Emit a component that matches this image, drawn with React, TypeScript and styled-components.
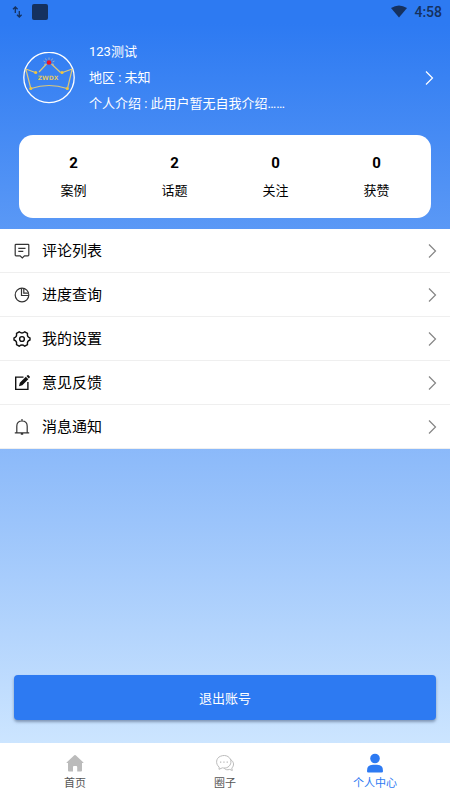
import React from "react";
import styled, { createGlobalStyle } from "styled-components";

const GlobalStyle = createGlobalStyle`
  * { box-sizing: border-box; }
  body {
    margin: 0;
    font-family: Roboto, "Noto Sans CJK SC", sans-serif;
    color: #000;
  }
  button { font: inherit; border: 0; margin: 0; padding: 0; background: none; cursor: pointer; }
  svg { display: block; flex: none; }
`;

const Screen = styled.div`
  min-height: 100vh;
  display: flex;
  flex-direction: column;
  background: linear-gradient(#2d7af2, #2d7af2 24px, #cce5ff calc(100% - 57px));
`;

const StatusBar = styled.header`
  height: 24px;
  padding: 0 8px 0 12px;
  display: flex;
  align-items: center;
  justify-content: space-between;
  color: #15315f;
`;

const StatusGroup = styled.div<{ $gap: number }>`
  display: flex;
  align-items: center;
  gap: ${(p) => p.$gap}px;
`;

const StatusTile = styled.span`
  width: 16px;
  height: 16px;
  border-radius: 2px;
  background: #15315f;
`;

const Clock = styled.time`
  font-size: 14px;
  line-height: 24px;
  font-weight: 500;
`;

const Main = styled.main`
  flex: 1;
  display: flex;
  flex-direction: column;
`;

const Profile = styled.button`
  display: flex;
  align-items: center;
  gap: 14px;
  width: 100%;
  padding: 15px 16px 18px 23px;
  color: #fff;
  text-align: left;
`;

const ProfileText = styled.div`
  flex: 1;
  font-size: 13px;
  line-height: 26px;
`;

const Line = styled.div``;

const Stats = styled.section`
  margin: 0 19px 11px;
  padding: 14px 4px 13px;
  border-radius: 14px;
  background: #fff;
  display: grid;
  grid-template-columns: repeat(4, 1fr);
`;

const Stat = styled.button`
  display: flex;
  flex-direction: column;
  align-items: center;
  color: #000;
  font-size: 13px;
`;

const StatValue = styled.strong`
  font-size: 15px;
  line-height: 28px;
`;

const StatLabel = styled.span`
  line-height: 28px;
`;

const Menu = styled.nav`
  background: #fff;
`;

const MenuRow = styled.button`
  width: 100%;
  height: 44px;
  padding: 0 13px;
  display: flex;
  align-items: center;
  gap: 11px;
  border-bottom: 1px solid #efefef;
  color: #000;
  text-align: left;
`;

const MenuLabel = styled.span`
  flex: 1;
  font-size: 15px;
  line-height: 22px;
`;

const Logout = styled.button`
  margin: auto 14px 23px;
  height: 45px;
  border-radius: 4px;
  background: #2d7af2;
  color: #fff;
  font-size: 13px;
  box-shadow: 0 2px 3px rgba(80, 100, 130, 0.6);
`;

const TabBar = styled.nav`
  height: 57px;
  display: grid;
  grid-template-columns: repeat(3, 1fr);
  background: #fff;
`;

const Tab = styled.button<{ $active?: boolean }>`
  display: flex;
  flex-direction: column;
  align-items: center;
  gap: 2px;
  padding-top: 10px;
  font-size: 11px;
  line-height: 18px;
  color: ${(p) => (p.$active ? "#2d7af2" : "#555")};
`;

const Transfer = () => (
  <svg width="11" height="14" viewBox="0 0 11 14" fill="none" stroke="currentColor" strokeWidth="1.3">
    <path d="M3.3 8V2M1 4.3 3.3 2l2.3 2.3M7.3 6v6M5 9.7 7.3 12l2.3-2.3" />
  </svg>
);

const Wifi = () => (
  <svg width="18" height="14" viewBox="0 0 18 14" fill="currentColor">
    <path d="M1 3Q9-2 17 3L9 12.4z" />
  </svg>
);

const Chevron = ({ color = "#858585" }: { color?: string }) => (
  <svg width="10" height="16" viewBox="0 0 10 16" fill="none" stroke={color} strokeWidth="1.2">
    <path d="m2 1.5 6.5 6.5L2 14.5" />
  </svg>
);

const Avatar = () => (
  <svg width="52" height="52" viewBox="0 0 52 52" fill="none" role="img" aria-label="ZWDX">
    <circle cx="26" cy="25.5" r="25.2" stroke="#fff" strokeWidth="1.3" />
    <g stroke="#d9c77d" strokeWidth="1.2">
      <path d="m16 20 7.5-8M28.5 12l9 8.5M2.8 17l9.5 3.5M49.2 17 39.5 20.5M2.8 17l5 19.5M49.2 17 44.5 36.5M8 36.5q18-6 36 0" />
    </g>
    <g fill="#f1c63d">
      <circle cx="12.7" cy="20.5" r="1.6" />
      <circle cx="39" cy="20.5" r="1.6" />
      <circle cx="7.8" cy="36.5" r="1.6" />
      <circle cx="44.3" cy="36.5" r="1.6" />
    </g>
    <path d="M26 5.5v2.2M22.5 6.5l1 1.8M29.5 6.5l-1 1.8M20.5 9l2 .9M31.5 9l-2 .9M21 12.5l1.6-.8M31 12.5l-1.6-.8" stroke="#b6b9b5" strokeWidth=".8" />
    <circle cx="26" cy="10.5" r="2.3" fill="#ee1424" />
    <text x="25" y="28" textAnchor="middle" fill="#dfc668" fontFamily="DejaVu Sans, sans-serif" fontSize="6" fontWeight="700">ZWDX</text>
  </svg>
);

const CommentIcon = () => (
  <svg width="18" height="18" viewBox="0 0 18 18" fill="none" stroke="#333" strokeWidth="1.2">
    <path d="M3 2.3h12q.8 0 .8.8v10q0 .8-.8.8h-3.5L9.3 16l-2.2-2.1H3q-.8 0-.8-.8v-10q0-.8.8-.8zM5.3 6.3h7.2M5.3 9.3h5" />
  </svg>
);

const PieIcon = () => (
  <svg width="18" height="18" viewBox="0 0 18 18" fill="none" stroke="#333" strokeWidth="1.2">
    <circle cx="9" cy="9" r="6.8" />
    <path d="M8.5 2.2v7.3h7.3M10.8 2.8v4.4h4.5" />
  </svg>
);

const GearIcon = () => (
  <svg width="18" height="18" viewBox="0 0 18 18" fill="none" stroke="#111" strokeWidth="1.4" strokeLinejoin="round">
    <path d="M6.2 1.8Q9 4.2 11.8 1.8L14.5 3.4Q13.8 7 17 8V10Q13.8 11 14.5 14.6L11.8 16.2Q9 13.8 6.2 16.2L3.5 14.6Q4.2 11 1 10V8Q4.2 7 3.5 3.4z" />
    <circle cx="9" cy="9" r="2.4" />
  </svg>
);

const EditIcon = () => (
  <svg width="18" height="18" viewBox="0 0 18 18" fill="none">
    <path d="M10.5 3.1H2.7v12.3h12.2V8" stroke="#111" strokeWidth="1.4" />
    <path d="m6 12.2.8-3.4 6-6 2.5 2.5-6 6zM13.5 2.1l1-.9q.5-.4 1 0l1.2 1.2q.5.5 0 1l-.9 1z" fill="#111" />
  </svg>
);

const BellIcon = () => (
  <svg width="18" height="18" viewBox="0 0 18 18" fill="none" stroke="#333" strokeWidth="1.2">
    <path d="M1.8 14.8h14.4M3.8 14.5V8.2q0-5.2 5.2-5.2t5.2 5.2v6.3M9 1v2M7.8 16.2h2.4" />
  </svg>
);

const HomeIcon = () => (
  <svg width="20" height="20" viewBox="0 0 20 20" fill="#bbb">
    <path d="M9.3 2.2q.7-.6 1.4 0l7.5 7q.7.8-.3.8h-.9v7.5q0 1-1 1h-3.8v-4.4q0-1-1-1H9q-1 0-1 1v4.4H4q-1 0-1-1V10h-.9q-1 0-.3-.8z" />
  </svg>
);

const ChatIcon = () => (
  <svg width="20" height="20" viewBox="0 0 20 20" fill="none" stroke="#bbb">
    <path d="M4.2 14.2C.2 10.8 1 5 5.4 3.3 11 .8 16.5 4.5 15.9 9.4c-.5 4.2-4.6 6.5-8.5 5.4L4 16.3z" />
    <path d="M16 6.8c3.2 2.3 3.2 6 .8 8.3l.5 2.4-2.6-1.1c-2.4.8-4.2.3-5.5-1.1" />
    <path d="M5 9.1h1.3M8.3 9.1h1.3M11.6 9.1h1.3" strokeWidth="1.4" />
  </svg>
);

const PersonIcon = () => (
  <svg width="20" height="20" viewBox="0 0 20 20" fill="currentColor">
    <circle cx="10" cy="5.5" r="4.8" />
    <path d="M2 18.2q-.6-6.5 6-6.5h4q6.6 0 6 6.5 0 1.3-1.3 1.3H3.3Q2 19.5 2 18.2z" />
  </svg>
);

const stats = [
  { value: 2, label: "案例" },
  { value: 2, label: "话题" },
  { value: 0, label: "关注" },
  { value: 0, label: "获赞" },
];

const menu = [
  { label: "评论列表", Icon: CommentIcon },
  { label: "进度查询", Icon: PieIcon },
  { label: "我的设置", Icon: GearIcon },
  { label: "意见反馈", Icon: EditIcon },
  { label: "消息通知", Icon: BellIcon },
];

const tabs = [
  { label: "首页", Icon: HomeIcon },
  { label: "圈子", Icon: ChatIcon },
  { label: "个人中心", Icon: PersonIcon, active: true },
];

export default function App() {
  return (
    <Screen>
      <GlobalStyle />
      <StatusBar>
        <StatusGroup $gap={9}>
          <Transfer />
          <StatusTile />
        </StatusGroup>
        <StatusGroup $gap={6}>
          <Wifi />
          <Clock>4:58</Clock>
        </StatusGroup>
      </StatusBar>
      <Main>
        <Profile type="button">
          <Avatar />
          <ProfileText>
            <Line>123测试</Line>
            <Line>地区 : 未知</Line>
            <Line>个人介绍 : 此用户暂无自我介绍……</Line>
          </ProfileText>
          <Chevron color="#fff" />
        </Profile>
        <Stats>
          {stats.map((s) => (
            <Stat type="button" key={s.label}>
              <StatValue>{s.value}</StatValue>
              <StatLabel>{s.label}</StatLabel>
            </Stat>
          ))}
        </Stats>
        <Menu>
          {menu.map(({ label, Icon }) => (
            <MenuRow type="button" key={label}>
              <Icon />
              <MenuLabel>{label}</MenuLabel>
              <Chevron />
            </MenuRow>
          ))}
        </Menu>
        <Logout type="button">退出账号</Logout>
      </Main>
      <TabBar>
        {tabs.map(({ label, Icon, active }) => (
          <Tab type="button" key={label} $active={active} aria-current={active ? "page" : undefined}>
            <Icon />
            {label}
          </Tab>
        ))}
      </TabBar>
    </Screen>
  );
}
